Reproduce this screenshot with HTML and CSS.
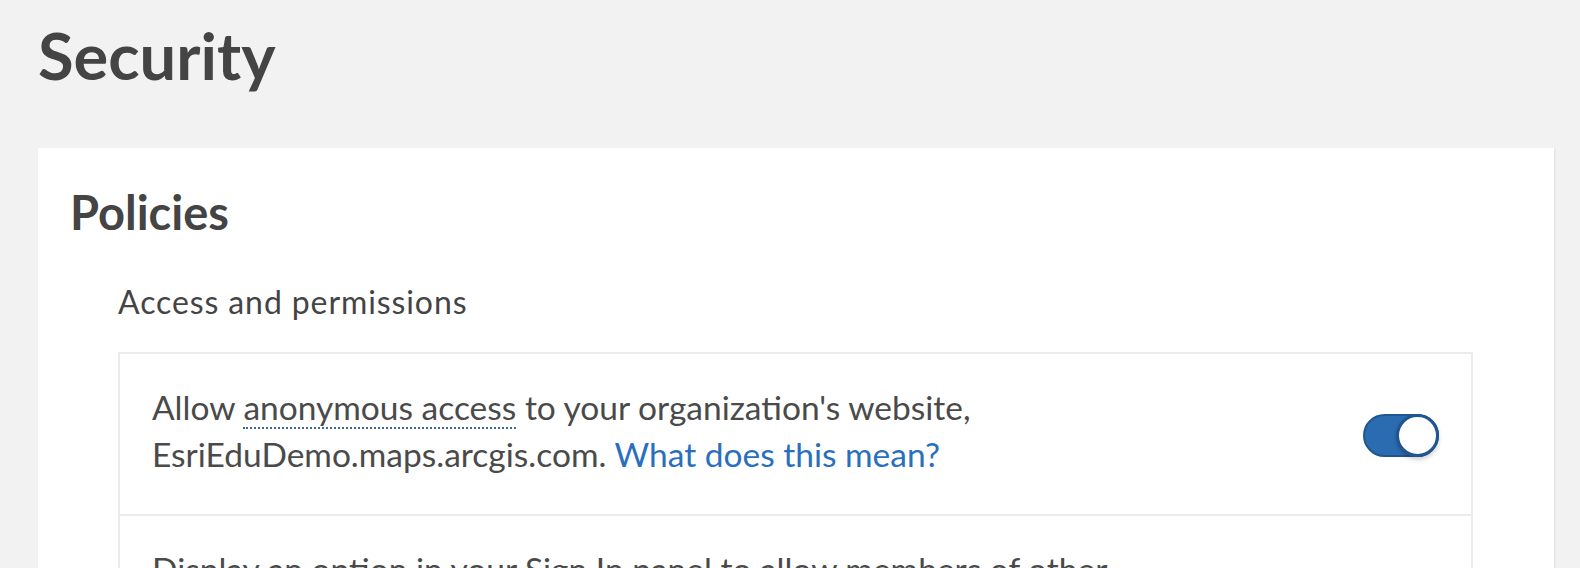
FILE: index.html
```html
<!DOCTYPE html>
<html lang="en">
<head>
<meta charset="utf-8">
<title>Security</title>
<link rel="stylesheet" href="styles.css">
</head>
<body>
<main class="page">
  <h1 class="page-title">Security</h1>
  <section class="card">
    <h2 class="card-title">Policies</h2>
    <div class="group">
      <h3 class="group-title">Access and permissions</h3>
      <div class="settings">
        <div class="setting-row">
          <p class="setting-text">Allow <span class="term">anonymous access</span> to your organization's website,<br>EsriEduDemo.maps.arcgis.com. <a class="link" href="#">What does this mean?</a></p>
          <span class="switch" role="switch" aria-checked="true"><span class="switch-knob"></span></span>
        </div>
        <div class="setting-row">
          <p class="setting-text">Display an option in your Sign In panel to allow members of other<br>organizations to sign in.</p>
        </div>
      </div>
    </div>
  </section>
</main>
</body>
</html>
```
FILE: styles.css
```css
html, body {
  margin: 0;
  padding: 0;
}
body {
  background: #f2f2f2;
  font-family: Lato, "Noto Sans", sans-serif;
  color: #4a4a4a;
  overflow: hidden;
}
.page {
  padding: 0 26px 0 38px;
}
.page-title {
  margin: 0;
  padding-top: 14px;
  height: 134px;
  font-size: 65px;
  font-weight: 700;
  line-height: 82px;
  color: #444;
}
.card {
  background: #fff;
  box-shadow: 1px 1px 2px rgba(0, 0, 0, 0.09);
  padding: 34px 81px 40px 32px;
}
.card-title {
  margin: 0;
  font-size: 47px;
  font-weight: 700;
  line-height: 60px;
  color: #444;
}
.group {
  margin-left: 48px;
}
.group-title {
  margin: 39px 0 0;
  font-size: 32px;
  font-weight: 400;
  letter-spacing: 0.9px;
  line-height: 42px;
  color: #444;
}
.settings {
  margin-top: 29px;
  border: 2px solid #ebebeb;
}
.setting-row {
  display: flex;
  align-items: center;
  justify-content: space-between;
  padding: 30px 32px 36px 32px;
}
.setting-row + .setting-row {
  border-top: 2px solid #ebebeb;
}
.setting-text {
  margin: 0;
  font-size: 33.5px;
  line-height: 47px;
}
.term {
  border-bottom: 2px dotted #3b6a98;
}
.link {
  color: #2a6fbd;
  text-decoration: none;
}
.switch {
  position: relative;
  flex: none;
  width: 76px;
  height: 43px;
  margin-top: 8px;
  box-sizing: border-box;
  border-radius: 22px;
  background: #2b6cb0;
  border: 2px solid #1f5591;
}
.switch-knob {
  position: absolute;
  top: -2px;
  right: -2px;
  width: 43px;
  height: 43px;
  box-sizing: border-box;
  border-radius: 50%;
  background: #fff;
  border: 3px solid #1f5591;
  box-shadow: 0 3px 4px rgba(0, 0, 0, 0.18);
}
```
